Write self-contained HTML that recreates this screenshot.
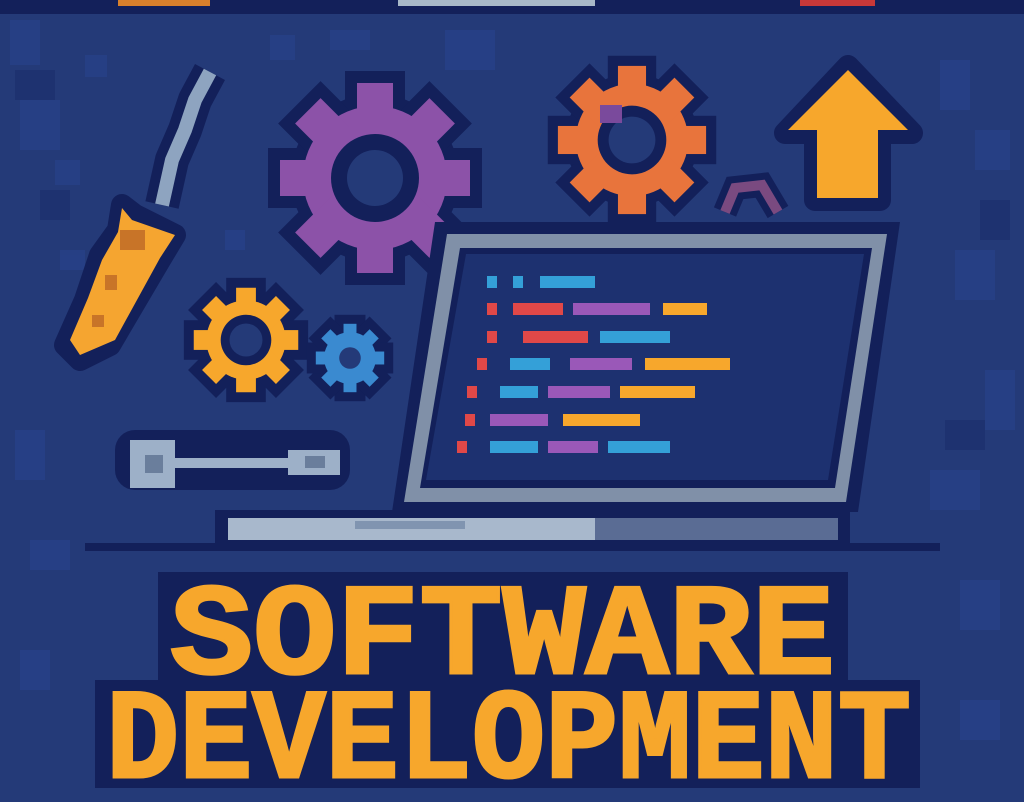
<!DOCTYPE html>
<html><head><meta charset="utf-8"><style>
html,body{margin:0;padding:0;background:#243a78;}
svg{display:block}
</style></head><body>
<svg width="1024" height="802" viewBox="0 0 1024 802" xmlns="http://www.w3.org/2000/svg">
<defs>
<g id="g8">
<circle cx="0" cy="0" r="72"/>
<rect x="-18" y="-95" width="36" height="190"/>
<rect x="-18" y="-95" width="36" height="190" transform="rotate(45)"/>
<rect x="-18" y="-95" width="36" height="190" transform="rotate(90)"/>
<rect x="-18" y="-95" width="36" height="190" transform="rotate(135)"/>
</g>
</defs>
<rect width="1024" height="802" fill="#243a78"/>
<!-- noise -->
<g fill="#28428a" opacity="0.7">
<rect x="10" y="20" width="30" height="45"/><rect x="85" y="55" width="22" height="22"/><rect x="20" y="100" width="40" height="50"/><rect x="55" y="160" width="25" height="25"/><rect x="270" y="35" width="25" height="25"/><rect x="330" y="30" width="40" height="20"/><rect x="445" y="30" width="50" height="40"/><rect x="940" y="60" width="30" height="50"/><rect x="975" y="130" width="35" height="40"/><rect x="955" y="250" width="40" height="50"/><rect x="985" y="370" width="30" height="60"/><rect x="930" y="470" width="50" height="40"/><rect x="15" y="430" width="30" height="50"/><rect x="30" y="540" width="40" height="30"/><rect x="960" y="580" width="40" height="50"/><rect x="20" y="650" width="30" height="40"/><rect x="960" y="700" width="40" height="40"/><rect x="225" y="230" width="20" height="20"/><rect x="60" y="250" width="25" height="20"/>
</g>
<g fill="#1e3270">
<rect x="15" y="70" width="40" height="30"/><rect x="40" y="190" width="30" height="30"/><rect x="980" y="200" width="30" height="40"/><rect x="945" y="420" width="40" height="30"/>
</g>
<!-- top strip -->
<rect x="0" y="0" width="1024" height="14" fill="#13205a"/>
<rect x="118" y="0" width="92" height="6" fill="#d8802c"/>
<rect x="398" y="0" width="197" height="6" fill="#a8b8c8"/>
<rect x="800" y="0" width="75" height="6" fill="#c83838"/>

<!-- screwdriver -->
<polyline points="210,72 195,100 185,130 172,160 162,205" fill="none" stroke="#13205a" stroke-width="34" stroke-linejoin="round"/>
<polyline points="210,72 195,100 185,130 172,160 162,205" fill="none" stroke="#8ea4c0" stroke-width="14"/>
<polygon points="122,205 135,215 175,235 160,260 110,345 80,360 65,345 85,300 100,255 118,230" fill="#13205a" stroke="#13205a" stroke-width="22" stroke-linejoin="round"/>
<polygon points="122,208 132,220 175,235 160,258 115,340 80,355 70,340 88,298 102,260 118,232" fill="#f5a530"/>
<rect x="120" y="230" width="25" height="20" fill="#c87428"/><rect x="105" y="275" width="12" height="15" fill="#c87428"/><rect x="92" y="315" width="12" height="12" fill="#c87428"/>

<!-- purple gear -->
<g transform="translate(375,178)">
<use href="#g8" fill="#13205a" stroke="#13205a" stroke-width="24"/>
<use href="#g8" fill="#8c52a8"/>
<circle r="44" fill="#13205a"/><circle r="28" fill="#243a78"/>
</g>
<!-- orange gear -->
<g transform="translate(632,140) scale(0.78)">
<use href="#g8" fill="#13205a" stroke="#13205a" stroke-width="26"/>
<use href="#g8" fill="#e8743c"/>
<circle r="44" fill="#13205a"/><circle r="30" fill="#243a78"/>
</g>
<rect x="600" y="105" width="22" height="18" fill="#7a4a9c"/>
<!-- small purple arc -->
<path d="M725,212 L735,188 L762,185 L778,212" fill="none" stroke="#13205a" stroke-width="24"/>
<path d="M725,212 L735,188 L762,185 L778,212" fill="none" stroke="#7a4a80" stroke-width="10"/>
<!-- arrow -->
<polygon points="848,66 912,133 880,133 880,200 815,200 815,133 785,133" fill="#13205a" stroke="#13205a" stroke-width="22" stroke-linejoin="round"/>
<polygon points="848,70 908,130 878,130 878,198 817,198 817,130 788,130" fill="#f7a72c"/>
<!-- yellow small gear -->
<g transform="translate(246,340) scale(0.55)">
<use href="#g8" fill="#13205a" stroke="#13205a" stroke-width="36"/>
<use href="#g8" fill="#f7a72c"/>
<circle r="46" fill="#13205a"/><circle r="30" fill="#243a78"/>
</g>
<!-- blue small gear -->
<g transform="translate(350,358) scale(0.36)">
<use href="#g8" fill="#13205a" stroke="#13205a" stroke-width="50"/>
<use href="#g8" fill="#3a8ad0"/>
<circle r="30" fill="#243a78"/>
</g>
<!-- wrench -->
<rect x="115" y="430" width="235" height="60" rx="20" fill="#13205a"/>
<rect x="130" y="440" width="45" height="48" fill="#9db0c8"/>
<rect x="145" y="455" width="18" height="18" fill="#6a7e9c"/>
<rect x="175" y="458" width="120" height="10" fill="#9db0c8"/>
<rect x="288" y="450" width="52" height="25" fill="#9db0c8"/>
<rect x="305" y="456" width="20" height="12" fill="#6a7e9c"/>

<!-- laptop -->
<polygon points="435,222 900,222 858,512 392,512" fill="#13205a"/>
<polygon points="447,234 887,234 846,502 404,502" fill="#8090a8"/>
<polygon points="460,248 872,248 835,488 420,488" fill="#13205a"/>
<polygon points="466,254 864,254 828,480 426,480" fill="#1d3170"/>
<rect x="85" y="543" width="855" height="8" fill="#13205a"/>
<rect x="215" y="510" width="635" height="36" fill="#13205a"/>
<rect x="228" y="518" width="367" height="22" fill="#a8b8cc"/>
<rect x="595" y="518" width="243" height="22" fill="#5a6c94"/>
<rect x="355" y="521" width="110" height="8" fill="#8094b0"/>
<!-- code -->
<g>
<rect x="487" y="276" width="10" height="12" fill="#34a0d8"/><rect x="513" y="276" width="10" height="12" fill="#34a0d8"/><rect x="540" y="276" width="55" height="12" fill="#34a0d8"/>
<rect x="487" y="303" width="10" height="12" fill="#e04848"/><rect x="513" y="303" width="50" height="12" fill="#e04848"/><rect x="573" y="303" width="77" height="12" fill="#9a58b8"/><rect x="663" y="303" width="44" height="12" fill="#f7a72c"/>
<rect x="487" y="331" width="10" height="12" fill="#e04848"/><rect x="523" y="331" width="65" height="12" fill="#e04848"/><rect x="600" y="331" width="70" height="12" fill="#34a0d8"/>
<rect x="477" y="358" width="10" height="12" fill="#e04848"/><rect x="510" y="358" width="40" height="12" fill="#34a0d8"/><rect x="570" y="358" width="62" height="12" fill="#9a58b8"/><rect x="645" y="358" width="85" height="12" fill="#f7a72c"/>
<rect x="467" y="386" width="10" height="12" fill="#e04848"/><rect x="500" y="386" width="38" height="12" fill="#34a0d8"/><rect x="548" y="386" width="62" height="12" fill="#9a58b8"/><rect x="620" y="386" width="75" height="12" fill="#f7a72c"/>
<rect x="465" y="414" width="10" height="12" fill="#e04848"/><rect x="490" y="414" width="58" height="12" fill="#9a58b8"/><rect x="563" y="414" width="77" height="12" fill="#f7a72c"/>
<rect x="457" y="441" width="10" height="12" fill="#e04848"/><rect x="490" y="441" width="48" height="12" fill="#34a0d8"/><rect x="548" y="441" width="50" height="12" fill="#9a58b8"/><rect x="608" y="441" width="62" height="12" fill="#34a0d8"/>
</g>

<!-- title -->
<rect x="158" y="572" width="690" height="112" fill="#13205a"/>
<rect x="95" y="680" width="825" height="108" fill="#13205a"/>
<text x="170" y="673" textLength="665" lengthAdjust="spacingAndGlyphs" font-family="Liberation Mono, monospace" font-weight="bold" font-size="130" fill="#f7a72c" stroke="#f7a72c" stroke-width="3">SOFTWARE</text>
<text x="106" y="777" textLength="805" lengthAdjust="spacingAndGlyphs" font-family="Liberation Mono, monospace" font-weight="bold" font-size="128" fill="#f7a72c" stroke="#f7a72c" stroke-width="3">DEVELOPMENT</text>
</svg>
</body></html>
